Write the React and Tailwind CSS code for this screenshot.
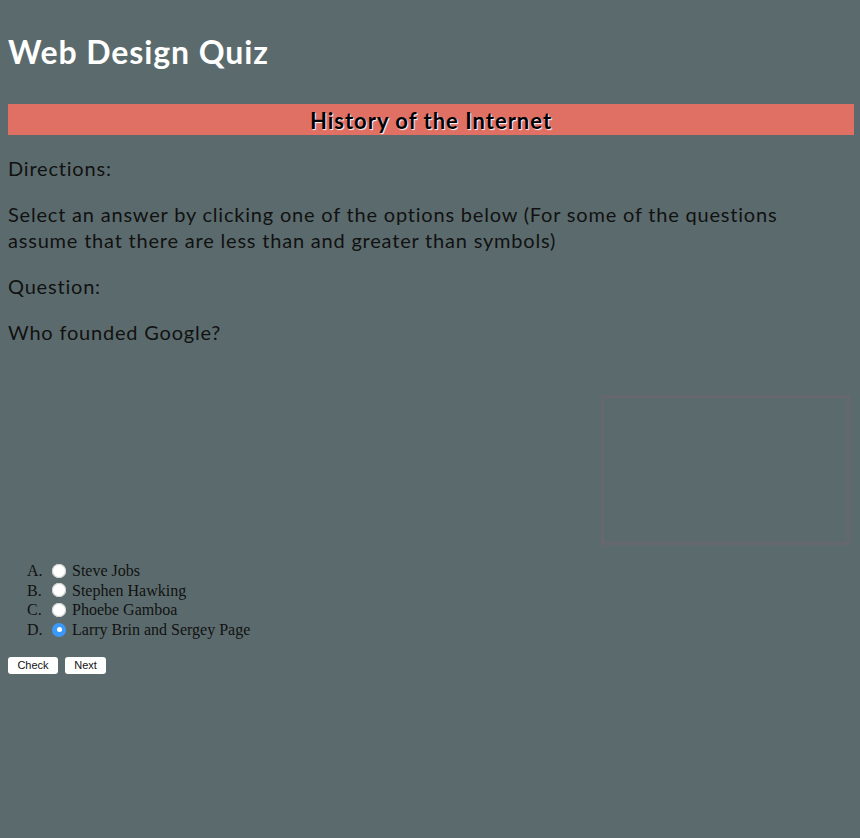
const OPTIONS = [
  { key: "A", label: "Steve Jobs" },
  { key: "B", label: "Stephen Hawking" },
  { key: "C", label: "Phoebe Gamboa" },
  { key: "D", label: "Larry Brin and Sergey Page" },
];

export default function App() {
  return (
    <div className="min-h-[838px] bg-[#5b6b6d] px-[8px] pt-[33px] font-['Lato',sans-serif] text-[#111]">
      <h1 className="text-[32px] font-bold leading-[38px] tracking-[0.9px] text-white">Web Design Quiz</h1>

      <h2 className="mt-[33px] mr-[-2px] h-[31px] bg-[#e07063] text-center text-[22px] font-bold leading-[33px] tracking-[1px] text-black [text-shadow:1px_1px_1px_#fff]">
        History of the Internet
      </h2>

      <div className="mt-[20px] text-[20px] leading-[26px] tracking-[0.8px]">
        <p>Directions:</p>
        <p className="mt-[20px] pr-[40px]">
          Select an answer by clicking one of the options below (For some of the questions assume that there are less than and greater than symbols)
        </p>
        <p className="mt-[20px]">Question:</p>
        <p className="mt-[20px]">Who founded Google?</p>
      </div>

      <div className="flex justify-end pr-[2px] mt-[50px]">
        <div className="h-[150px] w-[249px] border-[3px] border-[#676770]" />
      </div>

      <ol className="mt-[16px] font-['Liberation_Serif',serif] text-[16px] leading-[19.6px]">
        {OPTIONS.map((opt) => (
          <li key={opt.key} className="flex items-center">
            <span className="w-[37px] pl-[19px] text-left">{opt.key}.</span>
            <input
              type="radio"
              name="answer"
              defaultChecked={opt.key === "D"}
              className="ml-[7px] mr-[6px] grid h-[14px] w-[14px] appearance-none place-content-center rounded-full bg-white shadow-[inset_0_0_0_1px_#d0d0d0] checked:bg-[#3b99fc] checked:shadow-none before:h-[5px] before:w-[5px] before:rounded-full before:bg-white before:content-[''] before:hidden checked:before:block"
            />
            <span>{opt.label}</span>
          </li>
        ))}
      </ol>

      <div className="mt-[18px] flex gap-[7px] font-['Liberation_Sans',sans-serif] text-[11px]">
        <button type="button" className="h-[17px] w-[50px] rounded-[3px] bg-white leading-[17px]">
          Check
        </button>
        <button type="button" className="h-[17px] w-[41px] rounded-[3px] bg-white leading-[17px]">
          Next
        </button>
      </div>
    </div>
  );
}
